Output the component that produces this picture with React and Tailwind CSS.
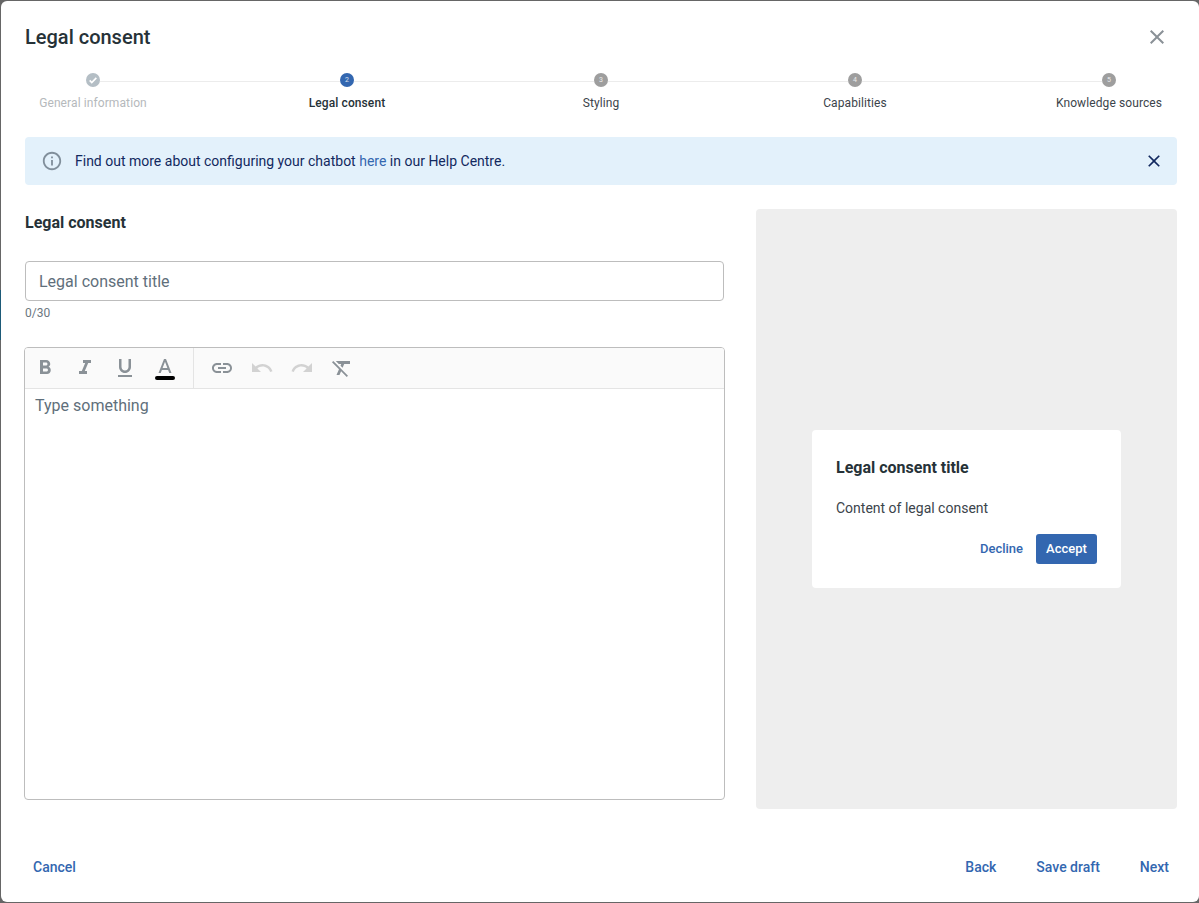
// Legal consent step of the chatbot setup dialog.
const icons = {
  bold: 'M15.6 10.79c.97-.67 1.65-1.77 1.65-2.79 0-2.26-1.75-4-4-4H7v14h7.04c2.09 0 3.71-1.7 3.71-3.79 0-1.52-.86-2.82-2.15-3.42zM10 6.5h3c.83 0 1.5.67 1.5 1.5s-.67 1.5-1.5 1.5h-3v-3zm3.5 9H10v-3h3.5c.83 0 1.5.67 1.5 1.5s-.67 1.5-1.5 1.5z',
  italic: 'M10 4v3h2.21l-3.42 8H6v3h8v-3h-2.21l3.42-8H18V4z',
  underline: 'M12 17c3.31 0 6-2.69 6-6V3h-2.5v8c0 1.93-1.57 3.5-3.5 3.5S8.5 12.93 8.5 11V3H6v8c0 3.31 2.69 6 6 6zm-7 2v2h14v-2H5z',
  colorA: 'M11 3L5.5 17h2.25l1.12-3h6.25l1.12 3h2.25L13 3h-2zm-1.38 9L12 5.67 14.38 12H9.62z',
  link: 'M3.9 12c0-1.71 1.39-3.1 3.1-3.1h4V7H7c-2.76 0-5 2.24-5 5s2.24 5 5 5h4v-1.9H7c-1.71 0-3.1-1.39-3.1-3.1zM8 13h8v-2H8v2zm9-6h-4v1.9h4c1.71 0 3.1 1.39 3.1 3.1s-1.39 3.1-3.1 3.1h-4V17h4c2.76 0 5-2.24 5-5s-2.24-5-5-5z',
  undo: 'M12.5 8c-2.65 0-5.05.99-6.9 2.6L2 7v9h9l-3.62-3.62c1.39-1.16 3.16-1.88 5.12-1.88 3.54 0 6.55 2.31 7.6 5.5l2.37-.78C21.08 11.03 17.15 8 12.5 8z',
  redo: 'M18.4 10.6C16.55 8.99 14.15 8 11.5 8c-4.65 0-8.58 3.03-9.96 7.22L3.9 16c1.05-3.19 4.05-5.5 7.6-5.5 1.95 0 3.73.72 5.12 1.88L13 16h9V7l-3.6 3.6z',
  clear: 'M3.27 5L2 6.27l6.97 6.97L6.5 19h3l1.57-3.66L16.73 21 18 19.73 3.55 5.27 3.27 5zM6 5v.18L8.82 8h2.4l-.72 1.68 2.1 2.1L14.21 8H20V5H6z',
  info: 'M11 7h2v2h-2zm0 4h2v6h-2zm1-9C6.48 2 2 6.48 2 12s4.48 10 10 10 10-4.48 10-10S17.52 2 12 2zm0 18c-4.41 0-8-3.59-8-8s3.59-8 8-8 8 3.59 8 8-3.59 8-8 8z',
  close: 'M19 6.41L17.59 5 12 10.59 6.41 5 5 6.41 10.59 12 5 17.59 6.41 19 12 13.41 17.59 19 19 17.59 13.41 12z',
}

function Icon({ d, className }) {
  return (
    <svg viewBox="0 0 24 24" fill="currentColor" className={className}>
      <path d={d} />
    </svg>
  )
}

const steps = [
  { n: 1, label: 'General information', done: true },
  { n: 2, label: 'Legal consent', active: true },
  { n: 3, label: 'Styling' },
  { n: 4, label: 'Capabilities' },
  { n: 5, label: 'Knowledge sources' },
]

function Step({ step }) {
  let circle = 'bg-[#9e9e9e]'
  let label = 'text-[#3c444b]'
  if (step.done) {
    circle = 'bg-[#b4bec5]'
    label = 'text-[#b5b9bc]'
  }
  if (step.active) {
    circle = 'bg-[#3367b0]'
    label = 'font-medium text-[#263238]'
  }
  return (
    <div className="flex w-[14px] flex-col items-center">
      <div className={`flex h-[14px] w-[14px] items-center justify-center rounded-full text-[7px] leading-none text-white/80 ${circle}`}>
        {step.done ? (
          <svg viewBox="0 0 24 24" className="h-[10px] w-[10px]" fill="none" stroke="white" strokeWidth="4">
            <path d="M4 13l5 5L20 7" />
          </svg>
        ) : (
          step.n
        )}
      </div>
      <span className={`mt-[8px] whitespace-nowrap text-[12px] leading-[16px] tracking-[0.1px] ${label}`}>
        {step.label}
      </span>
    </div>
  )
}

function Stepper() {
  return (
    <div className="ml-[61px] mr-[61px] mt-[24px] flex h-[38px] items-start">
      {steps.map((step, i) => (
        <div key={step.n} className={i === 0 ? 'flex' : 'flex flex-1 items-start'}>
          {i > 0 && <div className="mt-[8px] h-px flex-1 bg-[#ececec]" />}
          <Step step={step} />
        </div>
      ))}
    </div>
  )
}

function Toolbar() {
  const btn = 'flex h-10 w-10 items-center justify-center'
  const dark = 'h-6 w-6 text-[#8a9197]'
  const faded = 'h-6 w-6 text-[#d2d2d2]'
  return (
    <div className="flex h-[41px] items-center border-b border-[#e4e4e4] bg-[#fafafa]">
      <div className="flex h-10 items-center border-r border-[#e4e4e4] pr-[8px]">
        <button className={btn}><Icon d={icons.bold} className={dark} /></button>
        <button className={btn}><Icon d={icons.italic} className={dark} /></button>
        <button className={btn}><Icon d={icons.underline} className={dark} /></button>
        <button className={`${btn} flex-col`}>
          <Icon d={icons.colorA} className={dark} />
          <span className="-mt-[4px] h-[4px] w-[20px] rounded-full bg-black" />
        </button>
      </div>
      <div className="flex items-center pl-[8px]">
        <button className={btn}><Icon d={icons.link} className={dark} /></button>
        <button className={btn}><Icon d={icons.undo} className={faded} /></button>
        <button className={btn}><Icon d={icons.redo} className={faded} /></button>
        <button className={btn}><Icon d={icons.clear} className={dark} /></button>
      </div>
    </div>
  )
}

function Preview() {
  return (
    <div className="flex h-[600px] w-[421px] items-center justify-center rounded-[4px] bg-[#eeeeee]">
      <div className="w-[309px] rounded-[4px] bg-white px-[24px] pb-[24px] pt-[28px]">
        <h3 className="text-[16px] font-bold leading-[20px] text-[#263238]">Legal consent title</h3>
        <p className="mt-[20px] text-[14px] leading-[20px] text-[#3c444b]">Content of legal consent</p>
        <div className="mt-[16px] flex items-center justify-end gap-[13px]">
          <button className="text-[13px] font-medium text-[#3367b0]">Decline</button>
          <button className="h-[30px] w-[61px] rounded-[3px] bg-[#3367b0] text-[13px] font-medium text-white">Accept</button>
        </div>
      </div>
    </div>
  )
}

export default function App() {
  return (
    <div className="relative h-[903px] w-[1199px] overflow-hidden bg-[#666666] pb-px pl-px pt-px font-['Roboto',sans-serif]">
      <div className="absolute left-0 top-[290px] h-[50px] w-px bg-[#1d5a78]" />
      <div className="flex h-full flex-col rounded-[6px] bg-white pl-[24px] pr-[22px]">
        <header className="mt-[24px] flex h-[24px] items-center justify-between">
          <h1 className="text-[20px] font-medium leading-[24px] text-[#263238]">Legal consent</h1>
          <Icon d={icons.close} className="mr-[8px] h-[24px] w-[24px] text-[#8a9197]" />
        </header>

        <Stepper />

        <div className="mt-[26px] flex h-[48px] items-center rounded-[4px] bg-[#e3f1fb] pl-[16px] pr-[13px]">
          <Icon d={icons.info} className="h-[22px] w-[22px] text-[#818f9b]" />
          <p className="ml-[12px] flex-1 text-[14px] leading-[20px] text-[#12295f]">
            Find out more about configuring your chatbot{' '}
            <a className="text-[#3367b0]">here</a> in our Help Centre.
          </p>
          <Icon d={icons.close} className="h-[20px] w-[20px] text-[#12295f]" />
        </div>

        <div className="mt-[24px] flex justify-between">
          <div className="w-[700px]">
            <h2 className="mt-[4px] text-[16px] font-bold leading-[20px] text-[#263238]">Legal consent</h2>
            <div className="mt-[28px] flex h-[40px] w-[699px] items-center rounded-[4px] border border-[#bdbdbd] px-[13px] pt-px text-[16px] text-[#5f6f7b]">
              Legal consent title
            </div>
            <p className="mt-[4px] text-[12px] leading-[16px] text-[#6b7780]">0/30</p>
            <div className="-ml-px mt-[26px] h-[453px] w-[701px] overflow-hidden rounded-[4px] border border-[#bdbdbd]">
              <Toolbar />
              <p className="px-[10px] pt-[6px] text-[16px] leading-[22px] text-[#5f6f7b]">Type something</p>
            </div>
          </div>
          <Preview />
        </div>

        <footer className="mb-[25px] mt-auto flex h-[20px] items-center justify-between text-[14px] font-medium text-[#3367b0]">
          <button className="ml-[8px]">Cancel</button>
          <div className="mr-[8px] flex gap-[40px]">
            <button>Back</button>
            <button>Save draft</button>
            <button>Next</button>
          </div>
        </footer>
      </div>
    </div>
  )
}
